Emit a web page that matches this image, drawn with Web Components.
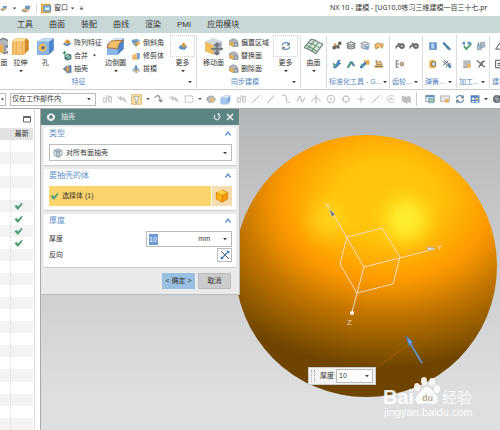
<!DOCTYPE html>
<html lang="zh-CN">
<head>
<meta charset="utf-8">
<title>NX 10 - 建模</title>
<style>
    html, body {
        margin: 0;
        height: 100%;
        overflow: hidden;
    }
    body {
        font: 7px/10px "Liberation Sans", "Noto Sans CJK SC", sans-serif;
        color: #333;
        background-color: #fff;
    }
</style>
</head>
<body>
<nx-app></nx-app>

<script>
// all the icons are drawn on a 16x16 grid
const ICONS = {
    gear: '<path d="M8 1l1 2 2-.6.7 2 2.3.4-.4 2.2L15 8l-1.4 1.4.4 2-2.3.6-.7 2-2-.6L8 15l-1-1.6-2 .6-.7-2-2.3-.6.4-2L1 8l1.4-1L2 4.800l2.300-.4.7-2 2 .6z" fill="#fff"/><circle cx="8" cy="8" r="3.200" fill="#5b8583"/>',
    reset: '<path d="M11 3.500A5.500 5.500 0 1 1 4 4.200" fill="none" stroke="#fff" stroke-width="2"/><path d="M8 1h5v5z" fill="#fff"/>',
    close: '<path d="M2 2l12 12M14 2L2 14" stroke="#fff" stroke-width="2.600"/>',
    up: '<path d="M3 11l5-7 5 7" fill="none" stroke="#5f90c8" stroke-width="2.600"/>',
    down: '<path d="M3 5h10l-5 6z" fill="#44382e"/>',
    downbar: '<path d="M3 3h10M3 7h10l-5 6z" fill="#555" stroke="#555" stroke-width="1.500"/>',
    tick: '<path d="M1 8l3-3 3 3 7-7 1 3-8 10z" fill="#4f9f78"/>',
    square: '<path d="M1 3h14v11H1zM1 5h14" fill="none" stroke="#555" stroke-width="1.800"/>',
    cubeY: '<path d="M8 1l6.500 3v7.500L8 15l-6.500-3.500V4z" fill="#f59a0c"/><path d="M8 1l6.500 3L8 7.500 1.500 4z" fill="#ffd23c"/><path d="M1.500 4L8 7.500V15l-6.500-3.500z" fill="#ffb81c"/><path d="M8 1l6.500 3v7.500L8 15l-6.500-3.500V4L8 7.500 14.500 4M8 7.500V15" fill="none" stroke="#c07010" stroke-width=".7"/>',
    cubeG: '<path d="M8 1l6.500 3v7.500L8 15l-6.500-3.500V4z" fill="#d9e3ea" stroke="#7c8a94"/><path d="M1.500 4L8 7v8M8 7l6.500-3M4 2.800l6.500 3.200v8M12 3L5.500 6v8" fill="none" stroke="#7c8a94"/>',
    cubeB: '<path d="M1 5l5-3h9v8l-4 5H1z" fill="#5c94d6"/><path d="M1 5l5-3h9l-4 4z" fill="#cbdff4"/><path d="M1 5l10 1v9H1z" fill="#8db8e8"/>',
    flip: '<path d="M2 2l12 12" stroke="#444" stroke-width="1.500"/><path d="M14 2L2 14" stroke="#4a7fb5" stroke-width="2"/><path d="M15 1v5l-5-4zM1 15v-5l5 4z" fill="#4a7fb5"/>',
    extrude: '<path d="M1 4l3-3h9l2 2v8l-4 4H1z" fill="#d38a28"/><path d="M1 4l3-3h9l-2 3z" fill="#ffe09c"/><path d="M1 4h10v11H1z" fill="#efb353"/><path d="M3 4v11M6 4v11M8 4v11M11 4v11" stroke="#fbd591"/>',
    hole: '<path d="M1 4l5-3h9v10l-4 4H1z" fill="#4f86cb"/><path d="M1 4l5-3h9l-4 3z" fill="#c3dcf4"/><path d="M1 4h10v11H1z" fill="#8bb5e5"/><circle cx="5.500" cy="9" r="3.200" fill="#f2be51"/><circle cx="6" cy="9" r="1.500" fill="#536f90"/>',
    pattern: '<path d="M1 9l5-2 9 1-5 5-5-1z" fill="#5b8fca"/><path d="M3 7l5-5 5 4-4 4z" fill="#ebaa4a"/><path d="M8 2l5 4-4 4z" fill="#c98234"/>',
    unite: '<path d="M4 7l6-3 5 2v7l-6 2-5-2z" fill="#487f79"/><path d="M6 9l5-2M9 12l4-3" stroke="#b7d7cf" stroke-width="2"/><path d="M1 3h6M4 0v6" stroke="#2d9c6c" stroke-width="2"/>',
    shell: '<path d="M1 8l7-6v12zM8 4l5-3v13l-5 1z" fill="#76889b"/><path d="M7 6l4-2v7l-4 1z" fill="#e4a247"/><path d="M14 2v12" stroke="#3f75b5" stroke-width="2"/>',
    blend: '<path d="M1 6l6-5h8v9l-5 5H1z" fill="#4f86cb"/><path d="M1 6l6-5h8l-5 4z" fill="#dbe9f7"/><path d="M1 9h9v6H1z" fill="#8bb5e5"/><path d="M1 9c1-5 4-6 6-6h8c-3 1-5 3-5 7z" fill="#f2c06b" stroke="#9a6a34" stroke-width=".7"/>',
    chamfer: '<path d="M1 3l8-2 6 3-7 3v7l-5-4z" fill="#78a8dc"/><path d="M5 7l8-2 2 4-7 5z" fill="#e6b165"/><path d="M2 6h9M8 7v6" stroke="#526d89"/>',
    trim: '<path d="M2 6h8v8H2z" fill="#efb766"/><path d="M8 3h6v9l-4 2V6z" fill="#6c9cd4"/><path d="M2 6l3-3h4L8 6z" fill="#f9dda9"/>',
    draft: '<path d="M1 10l7-8 7 8-6 5z" fill="#a9c2d9"/><path d="M8 2v11" stroke="#3d70ac" stroke-width="2"/><path d="M5 10h7l-4 4z" fill="#ecb65d"/>',
    moreBlue: '<path d="M1 9l5-3 9 2-4 6-8-1z" fill="#5b8fca"/><path d="M6 5l3-3 3 3v5H7z" fill="#dd9b44"/>',
    moreSync: '<path d="M2 7c1-5 8-6 10-2M14 9c-1 5-8 6-10 2" fill="none" stroke="#6c94b5" stroke-width="2.200"/><path d="M14 1v6H9zM2 15V9h5z" fill="#6a7780"/>',
    moveface: '<path d="M1 4l7-3 7 3v7l-6 4-8-3z" fill="#a8b1b9"/><path d="M1 4l7-3 7 3-7 3z" fill="#d5dade"/><path d="M1 4l7 3v8l-7-3z" fill="#f2bf59"/><path d="M11 5v10M6 10h10M11 5l-2 2m2-2l2 2M11 15l-2-2m2 2l2-2" fill="none" stroke="#70777d" stroke-width="1.500"/>',
    face: '<path d="M1 4l6-3 6 3v6l-5 4-7-3z" fill="#b2b8bc" stroke="#74797e"/><path d="M1 5l6 2v7l-6-3z" fill="#e7ae4b"/><path d="M8 7h7v7H8z" fill="#808b94"/><path d="M9 9l4 3M13 9l-4 3" stroke="#fff"/>',
    mesh: '<path d="M0 9l6-7c4 0 6 3 10 4l-6 8C7 12 4 10 0 9z" fill="#dfe8e2" stroke="#73857a"/><path d="M2 7c4 1 6 4 9 5M4 5c4 0 6 3 9 4M3 10l6-7M6 12l6-7" fill="none" stroke="#6e9b7c"/>',
    blocks: '<path d="M1 8h5v5H1zM7 7h5v5H7zM10 1h5v5h-5z" fill="#5b5b58"/><path d="M3 4h4v4H3z" fill="#d39a42"/><path d="M4 11l8-7" stroke="#444"/>',
    stack: '<path d="M1 4l7-3 7 3-7 3zM1 7l7 3 7-3M1 10l7 3 7-3M3 5v8M13 5v8" fill="#d8e0d6" stroke="#6b7570" stroke-width="1.500"/>',
    stackB: '<path d="M1 4l7-3 7 3-7 3zM1 7l7 3 7-3M1 10l7 3 7-3" fill="#e3e7e9" stroke="#878d92" stroke-width="1.500"/><path d="M9 8h5v6H9z" fill="#79a9d7"/>',
    tag: '<path d="M1 6l5-3 9 2-2 7-3-3-7 4z" fill="#eab55e" stroke="#aa7b38"/><path d="M5 6l6 5" stroke="#fff"/>',
    wrenchB: '<path d="M1 13l6-6 2-5 5-1-2 4 3 2-4 3-5 5z" fill="#4a85bd"/><path d="M2 7l5 6" stroke="#56987a" stroke-width="3"/>',
    wrenchG: '<path d="M1 13L7 3l4 1 4 8-4-1-2-3-5 7z" fill="#5b9d8c"/><path d="M8 5l5 6" stroke="#507fac" stroke-width="2"/>',
    wrenchY: '<path d="M6 2h9v7H8z" fill="#e8aa46"/><path d="M1 14l8-8" stroke="#4180bb" stroke-width="4"/><path d="M2 8l4 4" stroke="#57a67d" stroke-width="2"/>',
    stamp: '<path d="M1 10h13v4H1z" fill="#d8a34c"/><path d="M3 2l4 3 3-2 3 6H4z" fill="#eac27c" stroke="#765f3e"/><path d="M1 12h14" stroke="#666"/>',
    gearpair: '<circle cx="11" cy="8" r="3.500" fill="#aaa" stroke="#555" stroke-width="2"/><path d="M1 12l5-8 3 2M1 8h7" fill="none" stroke="#666" stroke-width="2"/>',
    gearlist: '<path d="M2 2v12M2 3h4M2 8h4M2 13h4" stroke="#666" stroke-width="1.500"/><circle cx="11" cy="8" r="3" fill="#e4bb75" stroke="#7b8790" stroke-width="1.500"/>',
    spring: '<path d="M2 2h12v12H2z" fill="#75a5df"/><path d="M2 4h12M2 7h12M2 10h12M2 13h12" stroke="#416ca5"/><path d="M5 4h5v8H5z" fill="#b9d4f0"/>',
    pen: '<path d="M3 1l10 10 1 4-5-2L1 4z" fill="#427da7"/><path d="M5 3l6 7" stroke="#a5cbe3"/>',
    springY: '<path d="M2 3l5-2 6 2v10l-6 2-5-2z" fill="#e9ac44"/><circle cx="9" cy="8" r="3.500" fill="#d8e1ea" stroke="#68747c" stroke-width="1.500"/>',
    springX: '<path d="M1 4l12 9M3 2l12 9M2 10l8-7M6 13l8-7" stroke="#67727c" stroke-width="1.600"/><path d="M10 10l4 4" stroke="#4884bb" stroke-width="3"/>',
    millA: '<path d="M1 1h4v5H1zM9 1h5v4H9z" fill="#5e97c7"/><path d="M3 8l4 5 8-9" fill="none" stroke="#4f9f72" stroke-width="3"/>',
    millB: '<path d="M2 6h7v8H2zM7 2h7v8H7z" fill="#aebdc9" stroke="#8b97a0"/><path d="M4 2v5" stroke="#5e97c7" stroke-width="2"/>',
    millC: '<path d="M2 2h12v9H2z" fill="#b7bdc2"/><path d="M2 13h6" stroke="#777" stroke-width="2"/><path d="M8 8h6v6H8z" fill="#e7b65e"/>',
    millD: '<path d="M1 2l6 5 7-4M8 7l-4 7M7 8l7 5M10 3v8" fill="none" stroke="#70757a" stroke-width="2"/>',
    tri: '<path d="M8 3l7 10H1z" fill="none" stroke="#555" stroke-width="1.600"/>',
    page: '<path d="M1 2h14v12H1zM4 7h8M4 10h8" fill="none" stroke="#555" stroke-width="1.600"/>',
    window: '<path d="M1 2h12v12H1z" fill="#f3d07d" stroke="#d9a548" stroke-width="2"/><path d="M4 4h10v8H4z" fill="#8ab8e7" stroke="#3e74ac"/><path d="M6 7h6v3H6z" fill="#e8f1fa"/>',
    touch: '<path d="M1 9l6-2 8-4-4 9-5 1z" fill="#e7ba76"/><path d="M6 4h7v5H6z" fill="#6c9ac5"/><path d="M1 11l7 2" stroke="#888" stroke-width="2"/>',
    dimA: '<path d="M2 6h5v7H2zM6 3h4v9M11 4h4v9h-4z" fill="#eee" stroke="#b8b8b8" stroke-width="1.500"/>',
    dimB: '<path d="M1 4l5 5V5l5 5V7l4 6" fill="none" stroke="#b5b5b5" stroke-width="2"/>',
    filter: '<path d="M1 1h14v14H1z" fill="#f7dc91" stroke="#d7a956" stroke-width="1.500"/><path d="M4 4h8L9 9v4H7V9z" fill="#fff" stroke="#6d7377"/>',
    snap: '<path d="M1 6c4-6 8-4 9 3" fill="none" stroke="#6e7779" stroke-width="2"/><path d="M6 9h9l-4 5z" fill="#6e7779"/>',
    rect: '<path d="M2 3h12v10H2z" fill="none" stroke="#888" stroke-width="1.300" stroke-dasharray="2 1"/>',
    shade: '<path d="M1 8c2-6 11-7 14 0l-3 5H4z" fill="#a7aaa8" stroke="#696d6d"/><path d="M7 7h6v5H7z" fill="#e5aa4b"/>',
    line: '<path d="M2 14L14 2" stroke="#888" stroke-width="1.300"/>',
    curve: '<path d="M2 2h4c6 2-2 11 8 12" fill="none" stroke="#888" stroke-width="1.300"/>',
    zig: '<path d="M1 11c4 0 3-8 5-8s2 10 4 10 2-7 5-7" fill="none" stroke="#888" stroke-width="1.300"/>',
    arc: '<path d="M1 12c4-8 10-8 14 0M8 1v14" fill="none" stroke="#888" stroke-width="1.300"/>',
    circle: '<circle cx="8" cy="8" r="6" fill="none" stroke="#999" stroke-width="1.300"/><path d="M6 8h4M8 6v4" stroke="#999"/>',
    ring: '<circle cx="8" cy="8" r="5" fill="none" stroke="#999" stroke-width="1.300"/><path d="M8 1v4M8 11v4M1 8h4M11 8h4" stroke="#999"/>',
    plus: '<path d="M8 2v12M2 8h12" stroke="#999" stroke-width="1.300"/>',
    orbit: '<path d="M13 4C8 0 1 4 2 9s8 6 12 3M5 8h8M9 5l-4 6" fill="none" stroke="#aaa" stroke-width="1.300"/>',
    globe: '<circle cx="8" cy="8" r="6.500" fill="#606a70"/><path d="M2 8h12M8 2v12M4 4l8 8" stroke="#c4ccd1"/>',
    winA: '<path d="M1 2h14v10H1z" fill="#e2edf5" stroke="#72889b"/><path d="M1 2h14v3H1z" fill="#5e8db9"/><path d="M6 7h8v7H6z" fill="#a0c7a5" stroke="#5e8db9"/>',
    winB: '<path d="M1 3h14v9H1z" fill="#e6e6e6" stroke="#929292"/><path d="M8 8h6v6H8z" fill="#e2b469"/>',
    grid: '<path d="M1 2h14v12H1z" fill="#4c83c1"/><path d="M3 6h4v3H3zM9 6h4v3H9zM3 11h4v2H3zM9 11h4v2H9z" fill="#fff"/><path d="M9 6h4v3H9z" fill="#efb259"/>',
    feather: '<path d="M2 3l4 2v9l-4-3zM7 4l3 2v9l-3-2zM11 3l4 2v9l-4-2z" fill="#b7b7b7" stroke="#999"/>',
}

const icon = (name, size = 9) => `<svg viewBox="0 0 16 16" width="${size}" height="${size}" aria-hidden="true">${ICONS[name]}</svg>`

const reset = /*html*/`
<style>
    :host { display: block; box-sizing: border-box; }
    * { box-sizing: border-box; }
    svg { display: block; flex: none; }
    button, input, select {
        font: inherit;
        color: inherit;
        margin: 0;
        padding: 0;
        border: 0;
        background: none;
        white-space: nowrap;
    }
</style>`

class NxElement extends HTMLElement {
    connectedCallback() {
        if (this.shadowRoot) return
        this.attachShadow({ mode: "open" })
        const template = document.createElement("template")
        template.innerHTML = reset + this.render()
        this.shadowRoot.appendChild(template.content.cloneNode(true))
    }
    attr (name, fallback = "") { return this.getAttribute(name) ?? fallback }
}

// icon only button
class NxIconButton extends NxElement {
    render () {
        return /*html*/`
        <style>
            :host { flex: none; }
            button { display: flex; align-items: center; justify-content: center; width: 100%; height: 100%; }
        </style>
        <button aria-label="${this.attr("name", this.attr("icon"))}">${icon(this.attr("icon"), this.attr("size", 9))}</button>`
    }
}
customElements.define("nx-icon-button", NxIconButton)

// large ribbon button, label below the icon
class NxTool extends NxElement {
    render () {
        const more = this.hasAttribute("boxed")
        return /*html*/`
        <style>
            :host { flex: none; width: 25px; }
            button { display: flex; flex-direction: column; align-items: center; width: 100%; }
            .pic {
                display: flex; align-items: center; justify-content: center;
                width: 100%; height: 22px;
                border: 1px dotted ${more ? "#ccc" : "transparent"};
            }
            .label { line-height: 11px; }
            .arrow { height: 6px; }
        </style>
        <button>
            <span class="pic">${icon(this.attr("icon"), more ? 10 : 19)}</span>
            <span class="label"><slot></slot></span>
            <span class="arrow">${this.hasAttribute("menu") ? icon("down", 6) : ""}</span>
        </button>`
    }
}
customElements.define("nx-tool", NxTool)

// small ribbon button, label at the right
class NxSmallTool extends NxElement {
    render () {
        return /*html*/`
        <style>
            button { display: flex; align-items: center; gap: 2px; height: 13px; }
            .arrow { padding-left: 2px; }
        </style>
        <button>${icon(this.attr("icon"), 10)}<slot></slot>${this.hasAttribute("menu") ? `<span class="arrow">${icon("down", 5)}</span>` : ""}</button>`
    }
}
customElements.define("nx-small-tool", NxSmallTool)

class NxGroup extends NxElement {
    render () {
        return /*html*/`
        <style>
            :host {
                flex: none;
                display: flex;
                flex-direction: column;
                border-right: 1px solid #ddd;
            }
            .tools { display: flex; flex: 1; }
            footer {
                display: flex; align-items: center;
                height: 12px; padding: 0 3px 0 2px;
                color: #5585bd;
                white-space: nowrap;
            }
            .name { flex: 1; text-align: ${this.attr("align", "center")}; }
        </style>
        <div class="tools"><slot></slot></div>
        <footer><span class="name">${this.attr("label")}</span>${this.hasAttribute("menu") ? icon("down", 6) : ""}</footer>`
    }
}
customElements.define("nx-group", NxGroup)

class NxTitleBar extends NxElement {
    render () {
        return /*html*/`
        <style>
            :host { display: flex; align-items: center; height: 16px; overflow: hidden; white-space: nowrap; }
            .quick { display: flex; align-items: center; gap: 4px; width: 330px; flex: none; }
            i { width: 1px; height: 11px; background-color: #ddd; }
            button { display: flex; align-items: center; gap: 2px; }
            h1 { margin: 0; font: 7px/10px "Noto Sans", "Noto Sans CJK SC", sans-serif; }
        </style>
        <div class="quick">
            <nx-icon-button icon="touch" size="8"></nx-icon-button>
            <nx-icon-button icon="down" size="5"></nx-icon-button>
            <nx-icon-button icon="touch" size="11"></nx-icon-button>
            <i></i>
            <button>${icon("window", 11)}窗口 ${icon("down", 5)}</button>
            <nx-icon-button icon="downbar" size="5"></nx-icon-button>
        </div>
        <h1>NX 10 - 建模 - [UG10.0练习三维建模一百三十七.pr</h1>`
    }
}
customElements.define("nx-title-bar", NxTitleBar)

class NxTabs extends NxElement {
    render () {
        const tabs = ["工具", "曲面", "装配", "曲线", "渲染", "PMI", "应用模块"]
        return /*html*/`
        <style>
            nav {
                display: flex; align-items: center; gap: 16px;
                height: 17px; padding-left: 17px;
                background-color: #c8d8d7;
                font-size: 8px;
            }
        </style>
        <nav>${tabs.map((t) => `<button>${t}</button>`).join("")}</nav>`
    }
}
customElements.define("nx-tabs", NxTabs)

class NxRibbon extends NxElement {
    render () {
        const grid = (names) => `<div class="icons">${names.map((n) => n ? `<nx-icon-button icon="${n}" size="10"></nx-icon-button>` : "<span></span>").join("")}</div>`
        return /*html*/`
        <style>
            :host {
                display: flex;
                height: 57px; padding: 2px 0 1px;
                overflow: hidden;
                border-bottom: 1px solid #ccc;
            }
            .col { display: flex; flex-direction: column; padding-top: 1px; }
            .col.a { width: 41px; }
            .col.b { width: 39px; }
            .icons {
                display: grid;
                grid-template-columns: repeat(auto-fill, 14px);
                grid-auto-rows: 18px;
                padding: 2px 0 0 3px;
                flex: 1;
            }
            /* the first group runs off the left edge of the window */
            .g1 { width: 229px; margin-left: -32px; }
            .g2 { width: 104px; } .g3 { width: 26px; }
            .g4 { width: 63px; } .g5 { width: 33px; } .g6 { width: 34px; }
            .off { width: 32px; }
            .cut { width: 8px; overflow: hidden; }
        </style>
        <nx-group class="g1" label="特征" menu>
            <span class="off"></span>
            <nx-tool class="cut" icon="face">面</nx-tool>
            <nx-tool icon="extrude" menu>拉伸</nx-tool>
            <nx-tool icon="hole">孔</nx-tool>
            <span style="width: 4px"></span>
            <div class="col a">
                <nx-small-tool icon="pattern">阵列特征</nx-small-tool>
                <nx-small-tool icon="unite" menu>合并</nx-small-tool>
                <nx-small-tool icon="shell">抽壳</nx-small-tool>
            </div>
            <nx-tool icon="blend" menu>边倒圆</nx-tool>
            <span style="width: 3px"></span>
            <div class="col b">
                <nx-small-tool icon="chamfer">倒斜角</nx-small-tool>
                <nx-small-tool icon="trim">修剪体</nx-small-tool>
                <nx-small-tool icon="draft">拔模</nx-small-tool>
            </div>
            <nx-tool icon="moreBlue" boxed menu>更多</nx-tool>
        </nx-group>
        <nx-group class="g2" label="同步建模" menu>
            <span style="width: 4px"></span>
            <nx-tool icon="moveface">移动面</nx-tool>
            <span style="width: 3px"></span>
            <div class="col a">
                <nx-small-tool icon="face">偏置区域</nx-small-tool>
                <nx-small-tool icon="face">替换面</nx-small-tool>
                <nx-small-tool icon="face">删除面</nx-small-tool>
            </div>
            <span style="width: 3px"></span>
            <nx-tool icon="moreSync" boxed menu>更多</nx-tool>
        </nx-group>
        <nx-group class="g3">
            <nx-tool icon="mesh" menu>曲面</nx-tool>
        </nx-group>
        <nx-group class="g4" label="标准化工具 - G..." align="left" menu>${grid(["blocks", "stack", "stackB", "tag", "wrenchB", "wrenchG", "wrenchY", "stamp"])}</nx-group>
        <nx-group class="g5" label="齿轮..." align="left" menu>${grid(["gearpair", "gearpair", "gearlist", ""])}</nx-group>
        <nx-group class="g6" label="弹簧..." align="left" menu>${grid(["spring", "pen", "springY", "springX"])}</nx-group>
        <nx-group class="g5" label="加工..." align="left" menu>${grid(["millA", "millB", "millC", "millD"])}</nx-group>
        <nx-group class="g5" label="建模..." align="left" menu>${grid(["tri", "page", "page", "tri"])}</nx-group>`
    }
}
customElements.define("nx-ribbon", NxRibbon)

// drop-down with an optional icon in front; options are separated by commas
class NxSelect extends NxElement {
    render () {
        const pic = this.attr("icon")
        return /*html*/`
        <style>
            :host {
                display: flex; align-items: center; gap: 3px;
                padding: 0 3px;
                border: 1px solid #bbb;
                background-color: #fff;
            }
            select { flex: 1; min-width: 0; appearance: none; outline: 0; }
        </style>
        ${pic ? icon(pic, 10) : ""}
        <select aria-label="${this.attr("name")}">${this.attr("options").split(",").map((o) => `<option>${o}</option>`).join("")}</select>
        ${icon("down", 6)}`
    }
}
customElements.define("nx-select", NxSelect)

class NxSelectionBar extends NxElement {
    render () {
        const left = ["dimA", "dimB", "filter", "snap", "dimB", "rect", "shade", "cubeB", "dimA", "line", "line", "curve", "zig", "arc", "circle", "ring", "plus", "line", "orbit", "feather"]
        const right = ["winA", "winB", "moreSync", "grid", "globe"]
        const buttons = (names) => names.map((n) => `<nx-icon-button icon="${n}" size="${n == "cubeB" || n == "filter" ? 11 : 10}"></nx-icon-button>`
            + (["filter", "rect", "grid"].includes(n) ? '<nx-icon-button class="menu" icon="down" size="6"></nx-icon-button>' : "")).join("")
        return /*html*/`
        <style>
            :host {
                display: flex; align-items: center;
                height: 19px;
                overflow: hidden;
                border-bottom: 1px solid #aaa;
            }
            .first { width: 6px; height: 13px; border: 1px solid #bbb; border-left: 0; }
            .scope { flex: none; width: 86px; height: 13px; margin: 0 3px 0 4px; padding: 0 3px 0 1px; }
            .bar { display: flex; flex: none; align-items: center; }
            .bar.dim { opacity: .8; }
            .bar nx-icon-button { width: 15px; }
            .bar nx-icon-button.menu { width: 7px; }
            i { flex: none; width: 1px; height: 14px; margin: 0 5px 0 3px; background-color: #ccc; }
        </style>
        <nx-icon-button class="first" icon="down" size="5"></nx-icon-button>
        <nx-select class="scope" name="范围" options="仅在工作部件内"></nx-select>
        <div class="bar dim">${buttons(left)}</div>
        <i></i>
        <div class="bar">${buttons(right)}</div>`
    }
}
customElements.define("nx-selection-bar", NxSelectionBar)

class NxNavigator extends NxElement {
    render () {
        let rows = ""
        for (let i = 1; i < 25; i++) {
            rows += `<tr><td></td><td>${i >= 6 && i <= 9 ? icon("tick", 9) : ""}</td></tr>`
        }
        return /*html*/`
        <style>
            :host {
                flex: none;
                display: flex; flex-direction: column;
                width: 41px;
                border-right: 1px solid #aaa;
            }
            .side { flex: 1; display: flex; flex-direction: column; width: 35px; border-right: 1px solid #ddd; }
            .top { display: flex; justify-content: flex-end; align-items: center; height: 19px; padding-right: 3px; }
            table { flex: 1; width: 33px; border-collapse: collapse; }
            th, td { height: 12px; padding: 0; line-height: 10px; font-weight: normal; }
            td { padding-top: 1px; }
            tr > :first-child { width: 10px; border-right: 1px dotted #ddd; }
            thead tr { background-color: #e2e2e2; }
            tbody tr:nth-child(even) { background-color: #f3f3f3; }
            td svg { margin-left: 3px; }
        </style>
        <div class="side">
            <div class="top"><nx-icon-button icon="square" name="最大化" size="8"></nx-icon-button></div>
            <table>
                <thead><tr><th></th><th>最新</th></tr></thead>
                <tbody>${rows}</tbody>
            </table>
        </div>`
    }
}
customElements.define("nx-navigator", NxNavigator)

class NxSection extends NxElement {
    render () {
        return /*html*/`
        <style>
            :host { padding: 0 4px 4px 5px; background-color: #fff; border-bottom: 1px solid #ccc; }
            header { display: flex; align-items: center; justify-content: space-between; height: 13px; margin-bottom: 4px; }
            h3 { margin: 0; color: #5f90c8; font-size: 8px; font-weight: normal; }
        </style>
        <header><h3>${this.attr("label")}</h3><nx-icon-button icon="up" size="8"></nx-icon-button></header>
        <slot></slot>`
    }
}
customElements.define("nx-section", NxSection)

class NxShellDialog extends NxElement {
    render () {
        return /*html*/`
        <style>
            :host { width: 200px; background-color: #eaeaea; border: 1px solid #bbb; border-top: 0; }
            .title {
                display: flex; align-items: center; gap: 5px;
                height: 16px; padding: 0 5px;
                color: #e6efee; background-color: #5b8583;
            }
            .title span { flex: 1; }
            .body { display: flex; flex-direction: column; gap: 3px; padding: 2px 3px 0; }
            .type { height: 17px; }
            .body-row { display: flex; height: 20px; gap: 1px; }
            .pick {
                flex: 1;
                display: flex; align-items: center; gap: 3px;
                padding-left: 1px;
                background-color: #fbd46c;
            }
            .body-row nx-icon-button { width: 20px; background-color: #f5dcae; }
            .row { display: flex; align-items: center; justify-content: space-between; height: 16px; }
            .field {
                display: flex; align-items: center;
                width: 86px; height: 16px; padding: 0 3px 0 2px;
                border: 1px solid #bbb;
            }
            .field input { width: 9px; height: 11px; color: #fff; background-color: #6c9bd4; }
            .field .unit { flex: 1; text-align: right; padding-right: 12px; }
            .flip { width: 15px; height: 14px; border: 1px solid #bbb; }
            .actions { display: flex; justify-content: flex-end; gap: 3px; padding: 5px 8px 5px; }
            .actions button { width: 33px; height: 16px; background-color: #ccc; border: 1px solid #bbb; }
            .actions .ok { background-color: #99c0e0; border-color: #99c0e0; }
        </style>
        <div class="title">${icon("gear", 10)}<span>抽壳</span>
            <nx-icon-button icon="reset" name="重置" size="8"></nx-icon-button>
            <nx-icon-button icon="close" name="关闭" size="8"></nx-icon-button>
        </div>
        <div class="body">
            <nx-section label="类型">
                <nx-select class="type" name="类型" icon="cubeG" options="对所有面抽壳"></nx-select>
            </nx-section>
            <nx-section label="要抽壳的体">
                <div class="body-row">
                    <button class="pick">${icon("tick", 9)}选择体 (1)</button>
                    <nx-icon-button icon="cubeY" name="体" size="14"></nx-icon-button>
                </div>
            </nx-section>
            <nx-section label="厚度">
                <div class="row">
                    <label for="thickness">厚度</label>
                    <div class="field"><input id="thickness" value="10"><span class="unit">mm</span><nx-icon-button icon="down" size="6"></nx-icon-button></div>
                </div>
                <div class="row">
                    <span>反向</span>
                    <nx-icon-button class="flip" icon="flip" name="反向" size="10"></nx-icon-button>
                </div>
            </nx-section>
        </div>
        <div class="actions"><button class="ok">&lt; 确定 &gt;</button><button>取消</button></div>`
    }
}
customElements.define("nx-shell-dialog", NxShellDialog)

// on-screen input next to the drag handle
class NxFloatInput extends NxElement {
    render () {
        return /*html*/`
        <style>
            :host {
                display: flex; align-items: center; gap: 2px;
                width: 68px; height: 18px; padding: 1px 2px;
                background-color: #f3f3f3;
                border: 1px solid #ccc;
            }
            .grip { width: 4px; height: 12px; margin-right: 3px; border: dotted #aaa; border-width: 0 1px; }
            .field {
                flex: 1; display: flex; align-items: center;
                height: 14px; padding: 0 2px;
                background-color: #fff; border: 1px solid #bbb;
            }
            input { flex: 1; min-width: 0; width: 0; }
            label { white-space: nowrap; }
        </style>
        <span class="grip"></span>
        <label for="value">厚度</label>
        <div class="field"><input id="value" value="10"><nx-icon-button icon="down" size="6"></nx-icon-button></div>`
    }
}
customElements.define("nx-float-input", NxFloatInput)

class NxViewport extends NxElement {
    render () {
        return /*html*/`
        <style>
            :host {
                position: relative;
                flex: 1;
                min-width: 0;
                overflow: hidden;
                background: linear-gradient(#b3b6b8, #c3c5c7 30%, #d0d1d3 60%, #dedfe1 90%);
            }
            .scene { position: absolute; left: 0; top: 0; }
            nx-shell-dialog { position: absolute; left: -1px; top: 0; }
            nx-float-input { position: absolute; left: 267px; top: 258px; }
            text { font-family: "Liberation Sans", "Noto Sans CJK SC", sans-serif; }
        </style>
        <svg class="scene" viewBox="41 109 459 321" width="459" height="321">
            <defs>
                <radialGradient id="ball" gradientUnits="userSpaceOnUse" cx="0" cy="0" r="195" gradientTransform="translate(386 200) scale(1.300 1)">
                    <stop offset="0" stop-color="#ffc80a"/>
                    <stop offset=".2" stop-color="#ffc40a"/>
                    <stop offset=".3" stop-color="#ffb006"/>
                    <stop offset=".4" stop-color="#ff9c00"/>
                    <stop offset=".48" stop-color="#e88c00"/>
                    <stop offset=".58" stop-color="#c47600"/>
                    <stop offset=".72" stop-color="#985e00"/>
                    <stop offset=".86" stop-color="#6e4400"/>
                </radialGradient>
                <radialGradient id="shine">
                    <stop offset="0" stop-color="#fff034"/>
                    <stop offset=".35" stop-color="#ffea2c" stop-opacity=".9"/>
                    <stop offset="1" stop-color="#ffd010" stop-opacity="0"/>
                </radialGradient>
            </defs>
            <circle cx="366" cy="266" r="131" fill="url(#ball)"/>
            <circle cx="406" cy="219" r="36" fill="url(#shine)"/>
            <circle cx="327" cy="220" r="32" fill="url(#shine)" opacity=".4"/>
            <g fill="none" stroke="#f0dcc0">
                <path d="M364 267L332 212M364 267l71-18M364 267l-12 45M347 237l35-9 18 29-7 27-36 9-17-29z"/>
            </g>
            <path d="M329 209l6 5-3 3z" fill="#777" stroke="#ddd" stroke-width=".5"/>
            <path d="M436 248l-9-1 1 4z" fill="#ddd" stroke="#999" stroke-width=".5"/>
            <circle cx="352" cy="313" r="2" fill="#fff"/>
            <g font-size="8" fill="#e8dcc8"><text x="325" y="208">X</text><text x="437" y="250">Y</text><text x="347" y="325">Z</text></g>
            <path d="M377 367l31-22" stroke="#b06000" stroke-width=".8"/>
            <path d="M422 363l-12-20" stroke="#5d8fc0" stroke-width="2"/>
            <path d="M406 336l7 6-4 4z" fill="#6d9fda" stroke="#3c6c9c" stroke-width=".7"/>
            <g fill="#fff" opacity=".9">
                <text x="383" y="404" font-size="20" font-weight="bold">Bai</text>
                <ellipse cx="417" cy="387" rx="3" ry="4"/>
                <ellipse cx="424" cy="381" rx="3" ry="4"/>
                <ellipse cx="432" cy="382" rx="3" ry="4"/>
                <ellipse cx="437" cy="389" rx="3" ry="4"/>
                <path d="M427 387c4 0 5 4 9 8 4 5 1 9-3 9-3 0-4-1-7-1s-4 1-6 1c-5 0-6-5-3-8 4-4 6-9 10-9z"/>
                <text x="442" y="403" font-size="15">经验</text>
                <text x="384" y="416" font-size="11">jingyan.baidu.com</text>
            </g>
            <text x="422" y="401" font-size="9" font-weight="bold" fill="#b5aa98">du</text>
        </svg>
        <nx-float-input></nx-float-input>
        <nx-shell-dialog></nx-shell-dialog>`
    }
}
customElements.define("nx-viewport", NxViewport)

class NxApp extends NxElement {
    render () {
        return /*html*/`
        <style>
            :host { display: flex; flex-direction: column; height: 100vh; }
            main { flex: 1; display: flex; min-height: 0; overflow: hidden; }
        </style>
        <nx-title-bar></nx-title-bar>
        <nx-tabs></nx-tabs>
        <nx-ribbon></nx-ribbon>
        <nx-selection-bar></nx-selection-bar>
        <main>
            <nx-navigator></nx-navigator>
            <nx-viewport></nx-viewport>
        </main>`
    }
}
customElements.define("nx-app", NxApp)
</script>
</body>
</html>
